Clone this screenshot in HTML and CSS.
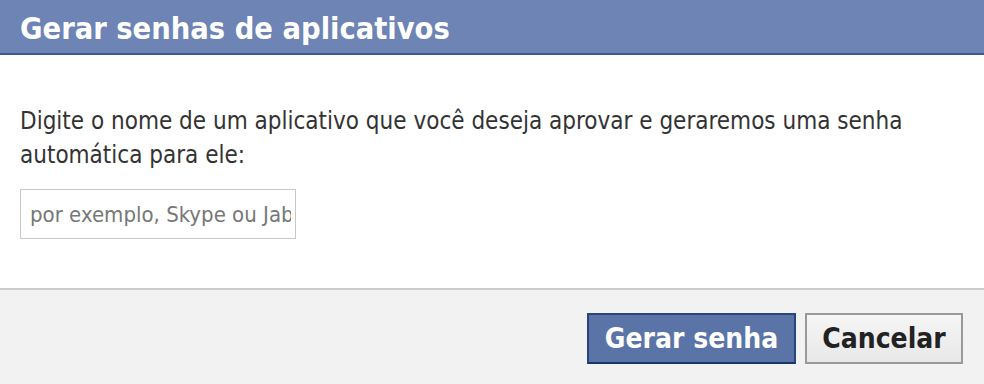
FILE: index.html
```html
<!DOCTYPE html>
<html lang="pt-BR">

<head>
  <meta charset="UTF-8">
  <meta name="viewport" content="width=device-width, initial-scale=1.0">
  <title>Gerar senhas de aplicativos</title>

  <link rel="stylesheet" href="styles.css">
</head>

<body>
  <div class="dialog">
    <!-- 標題 -->
    <div class="dialog_title">Gerar senhas de aplicativos</div>
    <!-- 內容 -->
    <div class="dialog_body">
      <p>Digite o nome de um aplicativo que você deseja aprovar e geraremos uma senha automática para ele:</p>
      <input class="app_name" type="text" placeholder="por exemplo, Skype ou Jabber">
    </div>
    <!-- 按鈕 -->
    <div class="dialog_footer">
      <button class="btn btn_confirm">Gerar senha</button>
      <button class="btn btn_cancel">Cancelar</button>
    </div>
  </div>
</body>

</html>
```

FILE: styles.css
```css
* {
  margin: 0;
  padding: 0;
  box-sizing: border-box;
}

body {
  width: 984px;
  height: 384px;
  overflow: hidden;
  background: white;
  font-family: 'DejaVu Sans Condensed', 'DejaVu Sans', sans-serif;
}

.dialog {
  display: flex;
  flex-direction: column;
  height: 100%;
}

/* 標題 */
.dialog_title {
  height: 55px;
  padding: 10px 20px 0;
  background: #6d84b4;
  border-bottom: 2px solid #3b5998;
  color: white;
  font-size: 30.5px;
  font-weight: bold;
  line-height: 38px;
}

/* 內容 */
.dialog_body {
  padding: 49px 20px 0;
  height: 233px;
}

.dialog_body p {
  width: 940px;
  font-size: 24px;
  line-height: 34px;
  color: #333;
}

.app_name {
  display: block;
  margin-top: 17px;
  width: 276px;
  height: 50px;
  padding: 0 4px 0 9px;
  border: 1px solid #c8c8c8;
  font-family: inherit;
  font-size: 22px;
  color: #333;
  outline: none;
}

.app_name::placeholder {
  color: #777;
}

/* 按鈕 */
.dialog_footer {
  flex: 1;
  display: flex;
  justify-content: flex-end;
  align-items: flex-start;
  gap: 9px;
  padding: 23px 21px 0 0;
  background: #f2f2f2;
  border-top: 2px solid #cccccc;
}

.btn {
  height: 51px;
  font-family: inherit;
  font-size: 28px;
  font-weight: bold;
  padding: 0 10px;
  border: 2px solid;
}

.btn_confirm {
  width: 209px;
  background: #5b74a8;
  border-color: #29447e #29447e #1a356e;
  color: white;
}

.btn_cancel {
  width: 158px;
  background: linear-gradient(#f5f5f5, #e8e8e8);
  border-color: #999;
  color: #222;
}
```
